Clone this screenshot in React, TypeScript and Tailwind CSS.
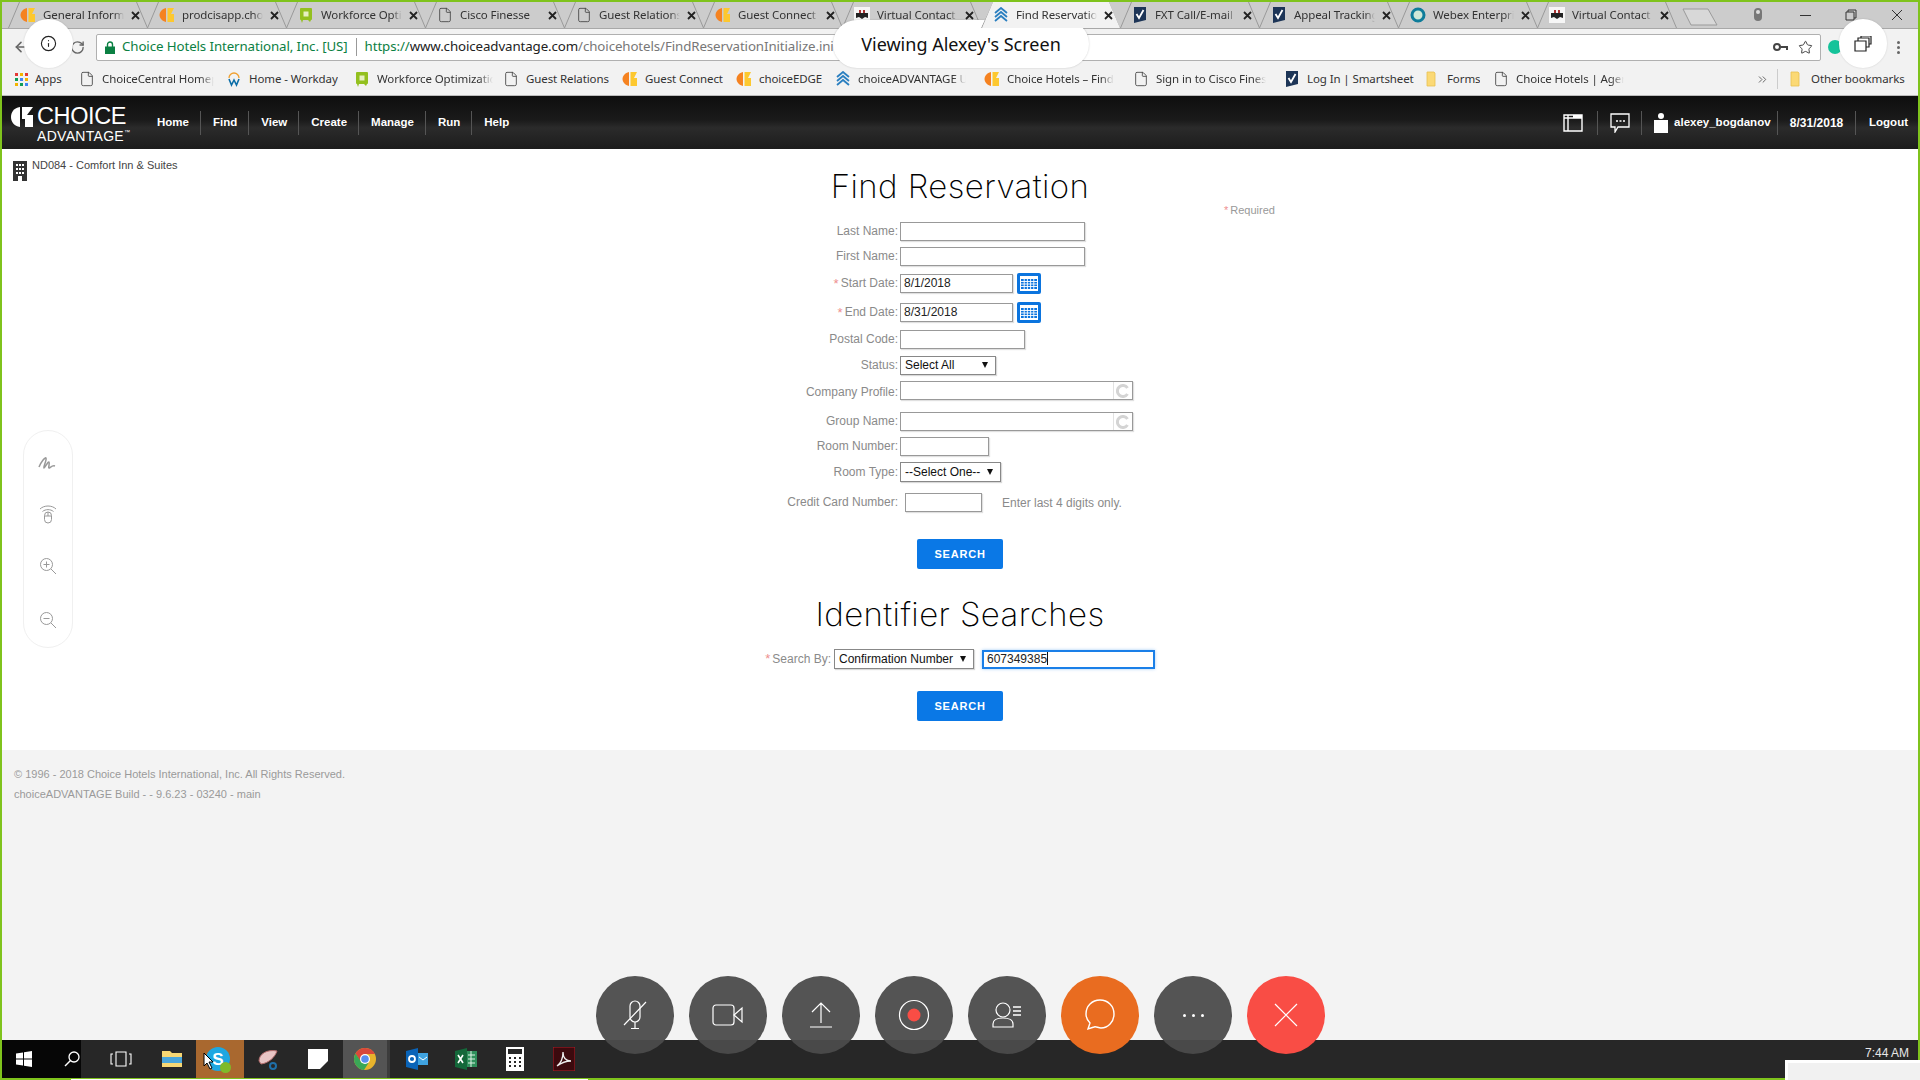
import { ReactNode } from "react";
import { File, Info, RotateCw, ArrowLeft, Star, ChevronsRight } from "lucide-react";

const arial = "font-['Liberation_Sans',Arial,sans-serif]";
const chrome = "font-['Noto_Sans',sans-serif]";

function ChoiceIcon() {
  return (
    <svg viewBox="0 0 16 16" className="w-4 h-4 shrink-0">
      <path d="M7 1C3 2 0.5 5 0.5 8s2.500 6 6.500 7z" fill="#f58220" />
      <path d="M8.500 1H15l-3 6h3v8H8.500z" fill="#fdc82f" />
    </svg>
  );
}

function DocIcon() {
  return <File size={16} strokeWidth={1.3} className="shrink-0 text-[#444]" />;
}

function GreenIcon() {
  return (
    <svg viewBox="0 0 16 16" className="w-4 h-4 shrink-0">
      <rect x="2" y="1" width="12" height="12" rx="1" fill="#93c01f" />
      <rect x="5.500" y="4.500" width="5" height="5" fill="#e6f0c0" />
      <path d="M3 13l1 3 1-3zM10 13l2 2 1-2z" fill="#93c01f" />
    </svg>
  );
}

function SmartIcon() {
  return (
    <svg viewBox="0 0 16 16" className="w-4 h-4 shrink-0">
      <path d="M2 0h12v13L2 16z" fill="#1d3557" />
      <path d="M4.500 7l2.500 4L11.500 3" fill="none" stroke="#fff" strokeWidth="1.800" />
    </svg>
  );
}

function ChevronIcon() {
  return (
    <svg viewBox="0 0 16 16" className="w-4 h-4 shrink-0">
      <path d="M2 6l6-5 6 5M2 10l6-5 6 5M2 14l6-5 6 5" fill="none" stroke="#2a7fc0" strokeWidth="1.800" />
    </svg>
  );
}

function WebexIcon() {
  return (
    <svg viewBox="0 0 16 16" className="w-4 h-4 shrink-0">
      <circle cx="8" cy="8" r="6" fill="#cfe8d8" stroke="#0e7c9a" strokeWidth="3" />
    </svg>
  );
}

function VirtualIcon() {
  return (
    <svg viewBox="0 0 16 16" className="w-4 h-4 shrink-0">
      <rect width="16" height="16" fill="#f6f6f6" />
      <path d="M2 6h12v5l-3-1-3 2-3-2-3 1z" fill="#222" />
      <path d="M5 3h2v3H5zM9 3h2v3H9z" fill="#a33" />
    </svg>
  );
}

function WorkdayIcon() {
  return (
    <svg viewBox="0 0 16 16" className="w-4 h-4 shrink-0">
      <path d="M3 7a5 5 0 0 1 10 0" fill="none" stroke="#f0a030" strokeWidth="1.300" />
      <path d="M3 8l2.500 6L8 9l2.500 5L13 8" fill="none" stroke="#0b6ea8" strokeWidth="1.600" />
    </svg>
  );
}

function FolderIcon() {
  return (
    <svg viewBox="0 0 16 16" className="w-4 h-4 shrink-0">
      <path d="M3 1h7l1 1v13H3z" fill="#fbd975" stroke="#e8c050" strokeWidth="0.800" />
    </svg>
  );
}

function AppsIcon() {
  return (
    <div className="grid grid-cols-3 gap-[2px] w-[13px] shrink-0">
      <div className="w-[3px] h-[3px] bg-[#e53935]" />
      <div className="w-[3px] h-[3px] bg-[#f4b400]" />
      <div className="w-[3px] h-[3px] bg-[#e53935]" />
      <div className="w-[3px] h-[3px] bg-[#0f9d58]" />
      <div className="w-[3px] h-[3px] bg-[#4285f4]" />
      <div className="w-[3px] h-[3px] bg-[#f4b400]" />
      <div className="w-[3px] h-[3px] bg-[#f4b400]" />
      <div className="w-[3px] h-[3px] bg-[#0f9d58]" />
      <div className="w-[3px] h-[3px] bg-[#4285f4]" />
    </div>
  );
}

const tabs: { title: string; icon: ReactNode; active?: boolean }[] = [
  { title: "General Information", icon: <ChoiceIcon /> },
  { title: "prodcisapp.choicehotels", icon: <ChoiceIcon /> },
  { title: "Workforce Optimization", icon: <GreenIcon /> },
  { title: "Cisco Finesse", icon: <DocIcon /> },
  { title: "Guest Relations", icon: <DocIcon /> },
  { title: "Guest Connect", icon: <ChoiceIcon /> },
  { title: "Virtual Contact", icon: <VirtualIcon /> },
  { title: "Find Reservation", icon: <ChevronIcon />, active: true },
  { title: "FXT Call/E-mail", icon: <SmartIcon /> },
  { title: "Appeal Tracking", icon: <SmartIcon /> },
  { title: "Webex Enterprise", icon: <WebexIcon /> },
  { title: "Virtual Contact", icon: <VirtualIcon /> },
];

function Tab({ title, icon, active }: { title: string; icon: ReactNode; active?: boolean }) {
  return (
    <div className={`relative w-[139px] h-[26px] shrink-0 flex items-center pl-[12px] ${active ? "bg-[#f2f2f2] [clip-path:polygon(12px_0,128px_0,139px_100%,0_100%)] z-10" : ""}`}>
      {icon}
      <div className={`${chrome} ml-[7px] w-[81px] whitespace-nowrap overflow-hidden text-[11.500px] leading-[16px] tracking-[-0.1px] text-[#333] [mask-image:linear-gradient(to_right,black_88%,transparent)]`}>
        {title}
      </div>
      <svg viewBox="0 0 9 9" className="ml-[7px] w-[9px] h-[9px] shrink-0">
        <path d="M1 1l7 7M8 1L1 8" stroke="#222" strokeWidth="1.800" />
      </svg>
      <svg viewBox="0 0 12 26" className="absolute left-0 top-0 w-[12px] h-[26px]">
        <path d="M11.500 0L0.500 26" stroke="#9a9a9a" fill="none" />
      </svg>
      <svg viewBox="0 0 12 26" className="absolute right-[-1px] top-0 w-[12px] h-[26px]">
        <path d="M0.500 0l11 26" stroke="#9a9a9a" fill="none" />
      </svg>
    </div>
  );
}

function Mark({ icon, text, className, fade }: { icon: ReactNode; text: string; className: string; fade?: boolean }) {
  return (
    <div className={`flex items-center shrink-0 ${className}`}>
      {icon}
      <span className={`${chrome} ml-[7px] whitespace-nowrap overflow-hidden text-[11.500px] tracking-[-0.1px] text-[#333] ${fade ? "[mask-image:linear-gradient(to_right,black_88%,transparent)]" : ""}`}>
        {text}
      </span>
    </div>
  );
}

function NavItem({ label, first }: { label: string; first?: boolean }) {
  return (
    <div className={`h-[24px] flex items-center pl-[12px] pr-[11px] ${first ? "" : "border-l border-[#555]"}`}>
      {label}
    </div>
  );
}

function Label({ children, required, className }: { children: ReactNode; required?: boolean; className?: string }) {
  return (
    <div className={`${className ?? "w-[896px] mr-[2px] pb-[1px]"} shrink-0 flex justify-end items-center text-[12px] text-[#8a8a8a] whitespace-nowrap`}>
      {required && <span className="text-[#ee8f8f] text-[13px] leading-none mr-[2px]">*</span>}
      {children}
    </div>
  );
}

function Field({ className, value }: { className: string; value?: string }) {
  return (
    <input
      readOnly
      value={value ?? ""}
      className={`${className} h-[19px] border border-[#999] shadow-[1px_1px_1px_rgba(0,0,0,0.12)] bg-white px-[3px] pb-[1px] text-[12px] text-[#222] outline-none`}
    />
  );
}

function Dropdown({ className, value }: { className: string; value: string }) {
  return (
    <div className={`${className} flex items-center justify-between border border-[#888] shadow-[1px_1px_1px_rgba(0,0,0,0.15)] bg-white pl-[4px] pr-[7px] pb-[1px] text-[12px] text-[#111]`}>
      <span className="whitespace-nowrap">{value}</span>
      <span className="w-0 h-0 border-l-[3px] border-r-[3px] border-t-[6px] border-l-transparent border-r-transparent border-t-[#111]" />
    </div>
  );
}

function CalendarButton() {
  return (
    <svg viewBox="0 0 24 21" className="w-[24px] h-[21px] ml-[4px]">
      <rect width="24" height="21" rx="2" fill="#0b74de" />
      <rect x="3" y="3" width="18" height="15" fill="#fff" />
      <rect x="4" y="6" width="16" height="10" fill="#0b74de" />
      <path d="M4 8.500h16M4 11h16M4 13.500h16M7.200 6v10M10.400 6v10M13.600 6v10M16.800 6v10" stroke="#fff" strokeWidth="0.900" />
    </svg>
  );
}

function LookupField() {
  return (
    <div className="w-[233px] h-[19px] flex border border-[#999] shadow-[1px_1px_1px_rgba(0,0,0,0.12)] bg-white">
      <div className="flex-1" />
      <div className="w-[19px] flex items-center justify-center border-l border-[#e2e2e2]">
        <svg viewBox="0 0 14 14" className="w-[14px] h-[14px]">
          <path d="M11.500 4A5.500 5.500 0 1 0 11.500 10" fill="none" stroke="#d4d4d4" strokeWidth="3" />
        </svg>
      </div>
    </div>
  );
}

function SearchButton({ className }: { className: string }) {
  return (
    <button className={`${className} block mx-auto w-[86px] h-[30px] rounded-[2px] bg-[#0a78e6] text-white text-[11px] font-bold tracking-[0.8px]`}>
      SEARCH
    </button>
  );
}

function Round({ color, children }: { color: string; children: ReactNode }) {
  return <div className={`${color} w-[78px] h-[78px] rounded-full flex items-center justify-center`}>{children}</div>;
}

function BarSlot({ className, children }: { className?: string; children: ReactNode }) {
  return <div className={`w-[49px] h-full shrink-0 flex items-center justify-center ${className ?? ""}`}>{children}</div>;
}

export default function App() {
  return (
    <div className={`${arial} relative w-[1920px] h-[1080px] overflow-hidden flex flex-col bg-[#7fc31c] pt-[2px] px-[2px]`}>
      {/* browser tabs */}
      <div className="h-[26px] shrink-0 flex items-center bg-[#cccccc] pl-[6px]">
        {tabs.map((t, i) => (
          <Tab key={i} title={t.title} icon={t.icon} active={t.active} />
        ))}
        <svg viewBox="0 0 36 18" className="w-[36px] h-[18px] ml-[6px] mt-[4px] shrink-0">
          <path d="M1 1h25l9 16H9z" fill="#d8d8d8" stroke="#9a9a9a" />
        </svg>
        <svg viewBox="0 0 14 16" className="w-[14px] h-[16px] ml-[33px] shrink-0">
          <path d="M7 1a4 4 0 0 1 4 4v5a4 4 0 0 1-8 0V5a4 4 0 0 1 4-4z" fill="#777" />
          <circle cx="7" cy="5" r="2" fill="#ddd" />
        </svg>
        <div className="w-[11px] h-[1px] bg-[#333] ml-[35px] shrink-0" />
        <svg viewBox="0 0 12 12" className="w-[12px] h-[12px] ml-[34px] shrink-0">
          <path d="M3 3V1h8v8H9M1 3h8v8H1z" fill="none" stroke="#333" />
        </svg>
        <svg viewBox="0 0 12 12" className="w-[12px] h-[12px] ml-[34px] shrink-0">
          <path d="M1 1l10 10M11 1L1 11" stroke="#333" />
        </svg>
      </div>

      {/* address bar */}
      <div className="h-[37px] shrink-0 flex items-center bg-[#f2f2f2] border-t border-[#a8a8a8]">
        <ArrowLeft size={16} strokeWidth={2.4} className="ml-[11px] text-[#666] shrink-0" />
        <RotateCw size={15} strokeWidth={2.2} className="ml-[41px] text-[#666] shrink-0" />
        <div className={`${chrome} ml-[11px] w-[1725px] h-[27px] shrink-0 flex items-center bg-white border border-[#b0b0b0] rounded-[2px] text-[13.300px] tracking-[-0.1px] whitespace-nowrap overflow-hidden`}>
          <svg viewBox="0 0 10 13" className="w-[10px] h-[13px] ml-[8px] shrink-0">
            <path d="M2.500 6V3.500a2.500 2.500 0 0 1 5 0V6" fill="none" stroke="#0b8043" strokeWidth="1.400" />
            <path d="M0 5.500h10V13H0z" fill="#0b8043" />
          </svg>
          <span className="ml-[7px] text-[#0b8043]">Choice Hotels International, Inc. [US]</span>
          <span className="mx-[8px] w-[1px] h-[18px] bg-[#999]" />
          <span className="text-[#0b8043]">https://</span>
          <span className="text-[#222]">www.choiceadvantage.com</span>
          <span className="text-[#777]">/choicehotels/FindReservationInitialize.init</span>
          <span className="flex-1" />
          <svg viewBox="0 0 16 10" className="w-[16px] h-[10px] shrink-0">
            <circle cx="4" cy="5" r="3" fill="none" stroke="#444" strokeWidth="2" />
            <path d="M7 4h8v4h-2V6h-5z" fill="#444" />
          </svg>
          <Star size={15} strokeWidth={1.6} className="ml-[9px] mr-[7px] text-[#444] shrink-0" />
        </div>
        <div className="w-[14px] h-[14px] ml-[7px] rounded-full bg-[#15c39a] shrink-0" />
        <div className="ml-[55px] flex flex-col gap-[2px] shrink-0">
          <span className="w-[3px] h-[3px] rounded-full bg-[#666]" />
          <span className="w-[3px] h-[3px] rounded-full bg-[#666]" />
          <span className="w-[3px] h-[3px] rounded-full bg-[#666]" />
        </div>
      </div>

      {/* bookmarks */}
      <div className="h-[31px] shrink-0 flex items-center bg-[#f2f2f2] border-b border-[#bcbcbc] pl-[13px] pb-[2px]">
        <Mark icon={<AppsIcon />} text="Apps" className="w-[64px]" />
        <Mark fade icon={<DocIcon />} text="ChoiceCentral Homepage" className="w-[147px] pr-[12px]" />
        <Mark icon={<WorkdayIcon />} text="Home - Workday" className="w-[128px]" />
        <Mark fade icon={<GreenIcon />} text="Workforce Optimization" className="w-[149px] pr-[10px]" />
        <Mark icon={<DocIcon />} text="Guest Relations" className="w-[119px]" />
        <Mark icon={<ChoiceIcon />} text="Guest Connect" className="w-[114px]" />
        <Mark icon={<ChoiceIcon />} text="choiceEDGE" className="w-[99px]" />
        <Mark fade icon={<ChevronIcon />} text="choiceADVANTAGE UI" className="w-[149px] pr-[18px]" />
        <Mark fade icon={<ChoiceIcon />} text="Choice Hotels – Find" className="w-[149px] pr-[14px]" />
        <Mark fade icon={<DocIcon />} text="Sign in to Cisco Finesse" className="w-[151px] pr-[18px]" />
        <Mark icon={<SmartIcon />} text="Log In | Smartsheet" className="w-[140px]" />
        <Mark icon={<FolderIcon />} text="Forms" className="w-[69px]" />
        <Mark fade icon={<DocIcon />} text="Choice Hotels | Agent" className="w-[263px] pr-[132px]" />
        <ChevronsRight size={13} strokeWidth={1.6} className="text-[#555] shrink-0" />
        <div className="ml-[8px] w-[1px] h-[20px] bg-[#ccc] shrink-0" />
        <Mark icon={<FolderIcon />} text="Other bookmarks" className="ml-[10px]" />
      </div>

      {/* app header */}
      <header className="h-[53px] shrink-0 flex items-center justify-between bg-[linear-gradient(to_bottom,#0e0e0e,#1a1a1a_45%,#2b2b2b_60%,#1c1c1c)] text-white text-[11.500px] font-bold">
        <div className="flex items-center">
          <div className="ml-[9px] w-[120px] flex flex-col pt-[2px]">
            <div className="flex items-center h-[24px]">
              <svg viewBox="0 0 22 20" className="w-[22px] h-[20px] shrink-0">
                <path d="M9 0C3 1 0 5 0 10s3 9 9 10z" fill="#fff" />
                <path d="M11 0h11l-6 8h6v4h-9l-2 0z" fill="#fff" />
                <path d="M14 12h8v8H14z" fill="#fff" />
              </svg>
              <span className="font-normal text-[23.500px] leading-none ml-[4px] tracking-[-0.4px]">CHOICE</span>
            </div>
            <div className="font-normal text-[14px] leading-none tracking-[0.3px] pl-[26px] whitespace-nowrap">
              ADVANTAGE<span className="text-[6px] align-top">™</span>
            </div>
          </div>
          <nav className="ml-[14px] flex items-center">
            <NavItem label="Home" first />
            <NavItem label="Find" />
            <NavItem label="View" />
            <NavItem label="Create" />
            <NavItem label="Manage" />
            <NavItem label="Run" />
            <NavItem label="Help" />
          </nav>
        </div>
        <div className="flex items-center">
          <svg viewBox="0 0 20 18" className="w-[20px] h-[18px] mr-[14px]">
            <path d="M1 1h18v16H1zM1 4h18M5 1v16" fill="none" stroke="#fff" strokeWidth="1.400" />
            <path d="M10 1h9v3h-9z" fill="#fff" />
          </svg>
          <div className="w-[44px] h-[24px] flex items-center justify-center border-l border-[#555]">
            <svg viewBox="0 0 20 20" className="w-[20px] h-[20px]">
              <path d="M1 1h18v13H8l-3 5v-5H1z" fill="none" stroke="#fff" strokeWidth="1.300" />
              <path d="M6 8h2M9.500 8h2M13 8h2" stroke="#fff" strokeWidth="1.600" />
            </svg>
          </div>
          <div className="w-[136px] h-[24px] flex items-center pl-[12px] border-l border-[#555]">
            <svg viewBox="0 0 14 20" className="w-[14px] h-[20px] mr-[6px]">
              <circle cx="7" cy="3" r="3" fill="#fff" />
              <path d="M0 7h14v13H0z" fill="#fff" />
            </svg>
            alexey_bogdanov
          </div>
          <div className="w-[78px] h-[24px] flex items-center justify-center border-l border-[#555] text-[12px]">8/31/2018</div>
          <div className="h-[24px] flex items-center pl-[13px] pr-[10px] border-l border-[#555]">Logout</div>
        </div>
      </header>

      {/* page body */}
      <main className="h-[601px] shrink-0 bg-white relative">
        <div className="absolute left-[11px] top-[9px] flex items-start">
          <svg viewBox="0 0 14 20" className="w-[14px] h-[20px] mt-[3px]">
            <path d="M0 0h14v20H0z" fill="#333" />
            <path d="M3 3h2v2H3zM6 3h2v2H6zM9 3h2v2H9zM3 7h2v2H3zM6 7h2v2H6zM9 7h2v2H9zM3 11h2v2H3zM6 11h2v2H6zM9 11h2v2H9zM5 15h4v5H5z" fill="#fff" />
          </svg>
          <span className="ml-[5px] text-[11px] leading-[14px] text-[#444]">ND084 - Comfort Inn &amp; Suites</span>
        </div>

        <h1 className="font-['Inter',sans-serif] font-[150] text-[33px] leading-[36px] tracking-[0.4px] text-center text-black mt-[19px] h-[36px]">Find Reservation</h1>
        <div className="pl-[1222px] h-[14px] text-[11px] leading-[12px] text-[#999]"><span className="text-[#ee8f8f] mr-[2px]">*</span>Required</div>

        <div className="mt-[4px] flex h-[19px]"><Label>Last Name:</Label><Field className="w-[185px]" /></div>
        <div className="mt-[6px] flex h-[19px]"><Label>First Name:</Label><Field className="w-[185px]" /></div>
        <div className="mt-[7px] flex items-center h-[21px]"><Label required>Start Date:</Label><Field className="w-[113px]" value="8/1/2018" /><CalendarButton /></div>
        <div className="mt-[8px] flex items-center h-[21px]"><Label required>End Date:</Label><Field className="w-[113px]" value="8/31/2018" /><CalendarButton /></div>
        <div className="mt-[7px] flex h-[19px]"><Label>Postal Code:</Label><Field className="w-[125px]" /></div>
        <div className="mt-[7px] flex h-[19px]"><Label>Status:</Label><Dropdown className="w-[96px]" value="Select All" /></div>
        <div className="mt-[6px] flex h-[19px]"><Label className="w-[896px] mr-[2px] pt-[3px]">Company Profile:</Label><LookupField /></div>
        <div className="mt-[12px] flex h-[19px]"><Label>Group Name:</Label><LookupField /></div>
        <div className="mt-[6px] flex h-[19px]"><Label>Room Number:</Label><Field className="w-[89px]" /></div>
        <div className="mt-[6px] flex h-[20px]"><Label>Room Type:</Label><Dropdown className="w-[101px]" value="--Select One--" /></div>
        <div className="mt-[11px] flex items-center h-[19px]">
          <Label>Credit Card Number:</Label>
          <Field className="w-[77px] ml-[5px]" />
          <span className="ml-[20px] text-[12px] text-[#8a8a8a]">Enter last 4 digits only.</span>
        </div>

        <SearchButton className="mt-[27px]" />

        <h2 className="font-['Inter',sans-serif] font-[150] text-[33px] leading-[40px] tracking-[0.4px] text-center text-black mt-[25px]">Identifier Searches</h2>

        <div className="mt-[15px] flex items-center h-[20px]">
          <Label required className="w-[829px] mr-[3px] pb-[1px]">Search By:</Label>
          <Dropdown className="w-[140px] h-[20px]" value="Confirmation Number" />
          <div className="ml-[8px] w-[173px] h-[19px] flex items-center border-2 border-[#1a7fe8] shadow-[0_0_3px_rgba(26,127,232,0.4)] bg-white pl-[3px] pb-[1px] text-[12px] text-[#222]">
            607349385<span className="w-[1px] h-[13px] bg-[#111]" />
          </div>
        </div>

        <SearchButton className="mt-[22px]" />
      </main>

      {/* footer */}
      <footer className="h-[290px] shrink-0 bg-[#f3f3f3] pl-[12px] pt-[14px] text-[11px] leading-[20px] text-[#9a9a9a]">
        <div>© 1996 - 2018 Choice Hotels International, Inc. All Rights Reserved.</div>
        <div>choiceADVANTAGE Build - - 9.6.23 - 03240 - main</div>
      </footer>

      {/* windows taskbar */}
      <div className="h-[38px] shrink-0 flex items-center bg-[#272727] text-white">
        <div className="w-[79px] h-full flex items-center bg-[#060606] shrink-0">
          <svg viewBox="0 0 16 16" className="w-[16px] h-[16px] ml-[14px]">
            <path d="M0 2.500l7-1V7.500H0zM8 1.300L16 0v7.500H8zM0 8.500h7v6l-7-1zM8 8.500h8V16l-8-1.200z" fill="#fff" />
          </svg>
          <svg viewBox="0 0 16 16" className="w-[16px] h-[16px] ml-[32px]">
            <circle cx="10" cy="6" r="5" fill="none" stroke="#fff" strokeWidth="1.300" />
            <path d="M6.500 9.500L1 15" stroke="#fff" strokeWidth="1.500" />
          </svg>
        </div>
        <BarSlot className="ml-[15px]">
          <svg viewBox="0 0 22 16" className="w-[22px] h-[16px]">
            <path d="M6 1h10v14H6zM3 3H1v10h2M19 3h2v10h-2" fill="none" stroke="#fff" strokeWidth="1.100" />
          </svg>
        </BarSlot>
        <BarSlot className="ml-[2px]">
          <svg viewBox="0 0 22 22" className="w-[22px] h-[22px]">
            <path d="M1 3h8l2 2h10v14H1z" fill="#f7d774" />
            <path d="M1 9h20v6H1z" fill="#4aa6dc" />
            <path d="M7 15h8v4H7z" fill="#f7d774" />
          </svg>
        </BarSlot>
        <div className="w-[48px] h-full shrink-0 flex items-center justify-center bg-[#a9682f] relative">
          <div className="w-[24px] h-[24px] ml-[-4px] rounded-full bg-[#1ea7e1] flex items-center justify-center text-[17px] font-bold leading-none">S</div>
          <div className="absolute left-[24px] top-[22px] w-[11px] h-[11px] rounded-full bg-[#7fba2a]" />
          <svg viewBox="0 0 12 18" className="absolute left-[7px] top-[11px] w-[12px] h-[20px]">
            <path d="M1 1v13l3-3 3 6 2-1-3-6h4z" fill="#fff" stroke="#000" />
          </svg>
        </div>
        <BarSlot>
          <svg viewBox="0 0 24 24" className="w-[24px] h-[24px]">
            <path d="M2 14C2 7 10 2 20 4c-2 6-8 12-16 13z" fill="#e8c4c4" stroke="#b36a6a" />
            <circle cx="16" cy="19" r="3" fill="none" stroke="#1f6fa8" strokeWidth="2" />
          </svg>
        </BarSlot>
        <BarSlot>
          <svg viewBox="0 0 20 20" className="w-[20px] h-[20px]">
            <path d="M0 0h20v20H0z" fill="#fff" />
            <path d="M12 20l8-8v8z" fill="#272727" />
          </svg>
        </BarSlot>
        <div className="w-[44px] ml-[1px] h-full shrink-0 flex items-center justify-center bg-[#545454]">
          <svg viewBox="0 0 24 24" className="w-[24px] h-[24px]">
            <circle cx="12" cy="12" r="11" fill="#e8b32c" />
            <path d="M12 1a11 11 0 0 0-9.500 5.500L7 14l5-7h10A11 11 0 0 0 12 1z" fill="#d9483b" />
            <path d="M2.500 6.500A11 11 0 0 0 11 23l4.500-7H9z" fill="#3aa757" />
            <circle cx="12" cy="12" r="5" fill="#fff" />
            <circle cx="12" cy="12" r="3.800" fill="#5a8ef0" />
          </svg>
        </div>
        <div className="w-[3px] h-full mr-[2px] bg-[#3c3c3c] shrink-0" />
        <BarSlot>
          <svg viewBox="0 0 24 24" className="w-[24px] h-[24px]">
            <path d="M12 6h11v12H12z" fill="#3fa3e0" />
            <path d="M14 10l4 3 4-3" stroke="#fff" fill="none" />
            <path d="M1 4l12-3v22L1 20z" fill="#0a64b8" />
            <circle cx="7" cy="12" r="3" fill="none" stroke="#fff" strokeWidth="1.800" />
          </svg>
        </BarSlot>
        <BarSlot>
          <svg viewBox="0 0 24 24" className="w-[24px] h-[24px]">
            <path d="M12 4h11v16H12z" fill="#2f8f5b" />
            <path d="M14 8h7M14 12h7M14 16h7M17 4v16" stroke="#dff2e6" />
            <path d="M1 4l12-3v22L1 20z" fill="#14683a" />
            <path d="M4 8l5 8M9 8l-5 8" stroke="#fff" strokeWidth="1.600" />
          </svg>
        </BarSlot>
        <BarSlot>
          <svg viewBox="0 0 18 24" className="w-[18px] h-[24px]">
            <path d="M0 0h18v24H0z" fill="#fff" />
            <path d="M2 2h14v5H2z" fill="#272727" />
            <path d="M3 10h2v2H3zM8 10h2v2H8zM13 10h2v2h-2zM3 14h2v2H3zM8 14h2v2H8zM13 14h2v2h-2zM3 18h2v2H3zM8 18h2v2H8zM13 18h2v2h-2z" fill="#272727" />
          </svg>
        </BarSlot>
        <BarSlot>
          <svg viewBox="0 0 22 24" className="w-[22px] h-[24px]">
            <path d="M0 0h22v24H0z" fill="#3c0a0e" stroke="#b01e28" />
            <path d="M4 19c4-3 6-9 6-14 0 6 3 9 8 9-5 0-10 2-14 5z" fill="none" stroke="#eee" strokeWidth="1.300" />
          </svg>
        </BarSlot>
        <div className="flex-1" />
        <span className="text-[12px] mr-[9px] mb-[12px] text-[#e8e8e8]">7:44 AM</span>
      </div>
      <div className="mt-[1px] ml-[69px] w-[517px] h-[1px] bg-white shrink-0" />

      {/* overlays from the share toolbar */}
      <div className="absolute left-[1785px] top-[1060px] w-[135px] h-[20px] bg-[#f1f1f1] border-l-[3px] border-t-[3px] border-white" />

      <div className="absolute left-[24px] top-[19px] w-[49px] h-[49px] rounded-full bg-white shadow-[0_0_2px_rgba(0,0,0,0.15)] flex items-center justify-center">
        <Info size={17} strokeWidth={1.6} className="text-[#222]" />
      </div>
      <div className={`${chrome} absolute left-[833px] top-[20px] w-[256px] h-[48px] rounded-full bg-white shadow-[0_0_2px_rgba(0,0,0,0.2)] flex items-center justify-center text-[18px] text-[#111]`}>
        Viewing Alexey's Screen
      </div>
      <div className="absolute left-[1839px] top-[19px] w-[48px] h-[49px] rounded-full bg-white shadow-[0_0_2px_rgba(0,0,0,0.15)] flex items-center justify-center">
        <svg viewBox="0 0 18 16" className="w-[18px] h-[16px]">
          <path d="M1 5h11v10H1zM4 5V2h11v9h-3M7 2V0h10v8h-2" fill="none" stroke="#222" strokeWidth="1.200" />
        </svg>
      </div>

      <div className="absolute left-[23px] top-[430px] w-[50px] h-[218px] rounded-full bg-white border border-[#f0f0f0] flex flex-col items-center text-[#999]">
        <svg viewBox="0 0 20 16" className="w-[20px] h-[18px] mt-[23px]">
          <path d="M1 12C3 7 7 2 8 3c1 2-3 9-2 10 1 0 4-7 5-6 1 1-1 6 0 6s3-3 6-2" fill="none" stroke="currentColor" strokeWidth="1.500" />
        </svg>
        <svg viewBox="0 0 18 20" className="w-[18px] h-[20px] mt-[32px]">
          <rect x="5.500" y="8" width="7" height="11" rx="3.500" fill="none" stroke="currentColor" />
          <path d="M5.500 12h7M9 8v4M1 5c4-4 12-4 16 0M3.500 7.500c3-2.500 8-2.500 11 0" fill="none" stroke="currentColor" />
        </svg>
        <svg viewBox="0 0 18 18" className="w-[18px] h-[18px] mt-[33px]">
          <circle cx="7.500" cy="7.500" r="6" fill="none" stroke="currentColor" />
          <path d="M12 12l5 5M4.500 7.500h6M7.500 4.500v6" stroke="currentColor" />
        </svg>
        <svg viewBox="0 0 18 18" className="w-[18px] h-[18px] mt-[36px]">
          <circle cx="7.500" cy="7.500" r="6" fill="none" stroke="currentColor" />
          <path d="M12 12l5 5M4.500 7.500h6" stroke="currentColor" />
        </svg>
      </div>

      <div className="absolute left-[596px] top-[976px] flex gap-[15px]">
        <Round color="bg-[#4b4b4b]/95">
          <svg viewBox="0 0 26 30" className="w-[26px] h-[30px]">
            <rect x="8" y="1" width="10" height="21" rx="5" fill="none" stroke="#fff" strokeWidth="1.200" />
            <path d="M13 22v6M9 28.500h8M2 25L24 2" stroke="#fff" strokeWidth="1.200" />
          </svg>
        </Round>
        <Round color="bg-[#4b4b4b]/95">
          <svg viewBox="0 0 32 22" className="w-[32px] h-[22px]">
            <rect x="1" y="1" width="21" height="20" rx="3" fill="none" stroke="#fff" strokeWidth="1.200" />
            <path d="M22 11l8-7v14z" fill="none" stroke="#fff" strokeWidth="1.200" />
          </svg>
        </Round>
        <Round color="bg-[#4b4b4b]/95">
          <svg viewBox="0 0 24 26" className="w-[24px] h-[26px]">
            <path d="M12 21V2M3 10l9-9 9 9M1 25h22" fill="none" stroke="#fff" strokeWidth="1.200" />
          </svg>
        </Round>
        <Round color="bg-[#4b4b4b]/95">
          <svg viewBox="0 0 32 32" className="w-[32px] h-[32px]">
            <circle cx="16" cy="16" r="14.500" fill="none" stroke="#fff" strokeWidth="1.200" />
            <circle cx="16" cy="16" r="6.500" fill="#f94d45" />
          </svg>
        </Round>
        <Round color="bg-[#4b4b4b]/95">
          <svg viewBox="0 0 32 26" className="w-[32px] h-[26px]">
            <circle cx="12" cy="8" r="7" fill="none" stroke="#fff" strokeWidth="1.200" />
            <path d="M2 25v-3c0-4 4-6 10-6s10 2 10 6v3z" fill="none" stroke="#fff" strokeWidth="1.200" />
            <path d="M22 5h8M22 9h8M22 13h8" stroke="#fff" strokeWidth="1.400" />
          </svg>
        </Round>
        <Round color="bg-[#e96c20]">
          <svg viewBox="0 0 32 32" className="w-[32px] h-[32px]">
            <path d="M16 1c8 0 14 6 14 14s-6 14-13 14c-3 0-5-2-7-1l-6 2 2-6C3 21 2 18 2 15 2 7 8 1 16 1z" fill="none" stroke="#fff" strokeWidth="1.400" />
          </svg>
        </Round>
        <Round color="bg-[#4b4b4b]/95">
          <div className="flex gap-[6px]">
            <span className="w-[3px] h-[3px] rounded-full bg-white" />
            <span className="w-[3px] h-[3px] rounded-full bg-white" />
            <span className="w-[3px] h-[3px] rounded-full bg-white" />
          </div>
        </Round>
        <Round color="bg-[#f94d45]">
          <svg viewBox="0 0 24 24" className="w-[24px] h-[24px]">
            <path d="M1 1l22 22M23 1L1 23" stroke="#fff" strokeWidth="1.200" />
          </svg>
        </Round>
      </div>
    </div>
  );
}
